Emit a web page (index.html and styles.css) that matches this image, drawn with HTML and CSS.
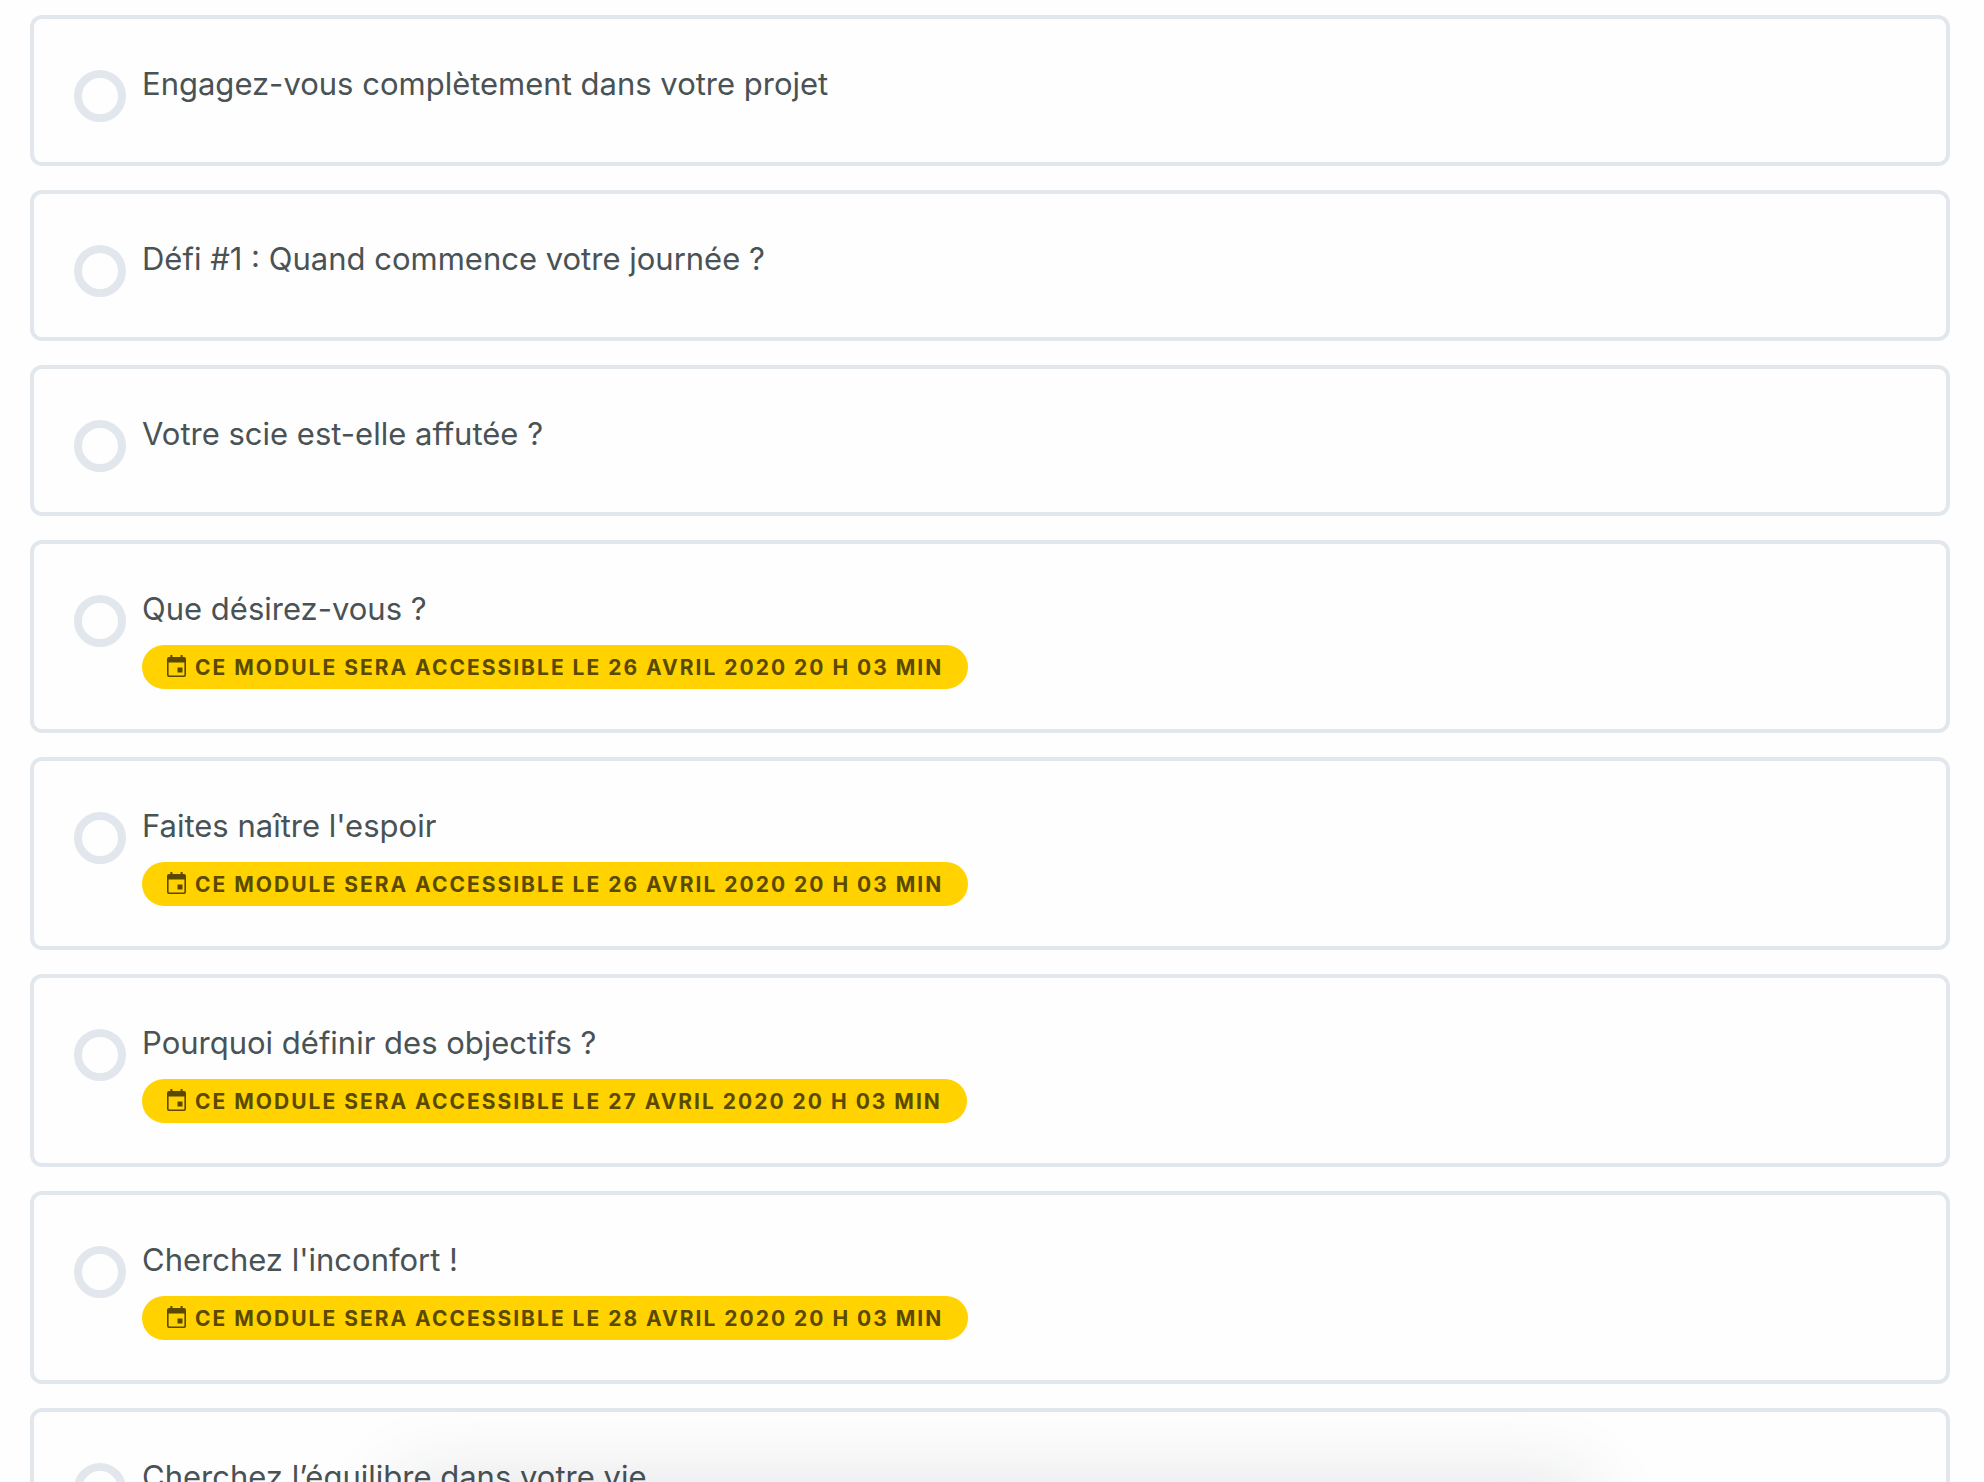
FILE: index.html
```
<!DOCTYPE html>
<html lang="fr">
    <head>
        <meta charset="utf-8">
        <title>Modules</title>
        <link rel="stylesheet" href="styles.css">
    </head>
    <body>
        <svg class="sprite" aria-hidden="true">
            <symbol id="calendar" viewBox="0 0 19 22">
                <path fill-rule="evenodd" d="M3.4 0h2v2h8.2V0h2v2H17a2 2 0 0 1 2 2v16a2 2 0 0 1-2 2H2a2 2 0 0 1-2-2V4a2 2 0 0 1 2-2h1.400zM1.600 7.500v12.200a.8.8 0 0 0 .8.8h14.200a.8.8 0 0 0 .8-.8V7.500zM10.500 12.500h5v5h-5z"/>
            </symbol>
        </svg>

        <main class="lessons">
            <a class="lesson" href="#">
                <span class="status"></span>
                <span class="title">Engagez-vous complètement dans votre projet</span>
            </a>
            <a class="lesson" href="#">
                <span class="status"></span>
                <span class="title">Défi #1 : Quand commence votre journée ?</span>
            </a>
            <a class="lesson" href="#">
                <span class="status"></span>
                <span class="title">Votre scie est-elle affutée ?</span>
            </a>
            <a class="lesson" href="#">
                <span class="status"></span>
                <span class="title">Que désirez-vous ?</span>
                <span class="badge"><svg class="icon"><use href="#calendar"/></svg>Ce module sera accessible le 26 avril 2020 20 h 03 min</span>
            </a>
            <a class="lesson" href="#">
                <span class="status"></span>
                <span class="title">Faites naître l'espoir</span>
                <span class="badge"><svg class="icon"><use href="#calendar"/></svg>Ce module sera accessible le 26 avril 2020 20 h 03 min</span>
            </a>
            <a class="lesson" href="#">
                <span class="status"></span>
                <span class="title">Pourquoi définir des objectifs ?</span>
                <span class="badge"><svg class="icon"><use href="#calendar"/></svg>Ce module sera accessible le 27 avril 2020 20 h 03 min</span>
            </a>
            <a class="lesson" href="#">
                <span class="status"></span>
                <span class="title">Cherchez l'inconfort !</span>
                <span class="badge"><svg class="icon"><use href="#calendar"/></svg>Ce module sera accessible le 28 avril 2020 20 h 03 min</span>
            </a>
            <a class="lesson" href="#">
                <span class="status"></span>
                <span class="title">Cherchez l’équilibre dans votre vie</span>
            </a>
        </main>

        <div class="drawer"></div>
    </body>
</html>
```
FILE: styles.css
```
* {
    box-sizing: border-box;
}

body {
    margin: 0;
    height: 100vh;
    overflow: hidden;
    background-color: #fefefe;
    font-family: Inter, "Liberation Sans", sans-serif;
}

.sprite {
    display: none;
}

.lessons {
    display: flex;
    flex-direction: column;
    gap: 24px;
    padding: 15px 34px 24px 30px;
}

.lesson {
    display: grid;
    grid-template-columns: 52px 1fr;
    grid-template-rows: 52px auto;
    column-gap: 16px;
    justify-items: start;
    min-height: 151px;
    padding: 40px;
    border: 4px solid #e2e7ed;
    border-radius: 12px;
    color: #495255;
    text-decoration: none;
}

.status {
    width: 52px;
    height: 52px;
    margin-top: 11px;
    border: 8px solid #e2e7ed;
    border-radius: 50%;
}

.title {
    font-size: 31px;
    line-height: 50px;
}

.badge {
    grid-column: 2;
    display: flex;
    align-items: center;
    gap: 9px;
    height: 44px;
    margin-top: 9px;
    padding: 0 25px;
    border-radius: 22px;
    background-color: #ffd200;
    color: #594a00;
    font-size: 21px;
    font-weight: 700;
    letter-spacing: 2px;
    text-transform: uppercase;
}

.icon {
    width: 19px;
    height: 22px;
    margin-bottom: 2px;
    fill: currentColor;
}

/* closed drawer, only its shadow reaches the page */
.drawer {
    position: fixed;
    top: 100%;
    left: 20%;
    right: 20%;
    height: 200px;
    box-shadow: 0 0 80px rgba(30, 35, 60, 0.13);
}
```
